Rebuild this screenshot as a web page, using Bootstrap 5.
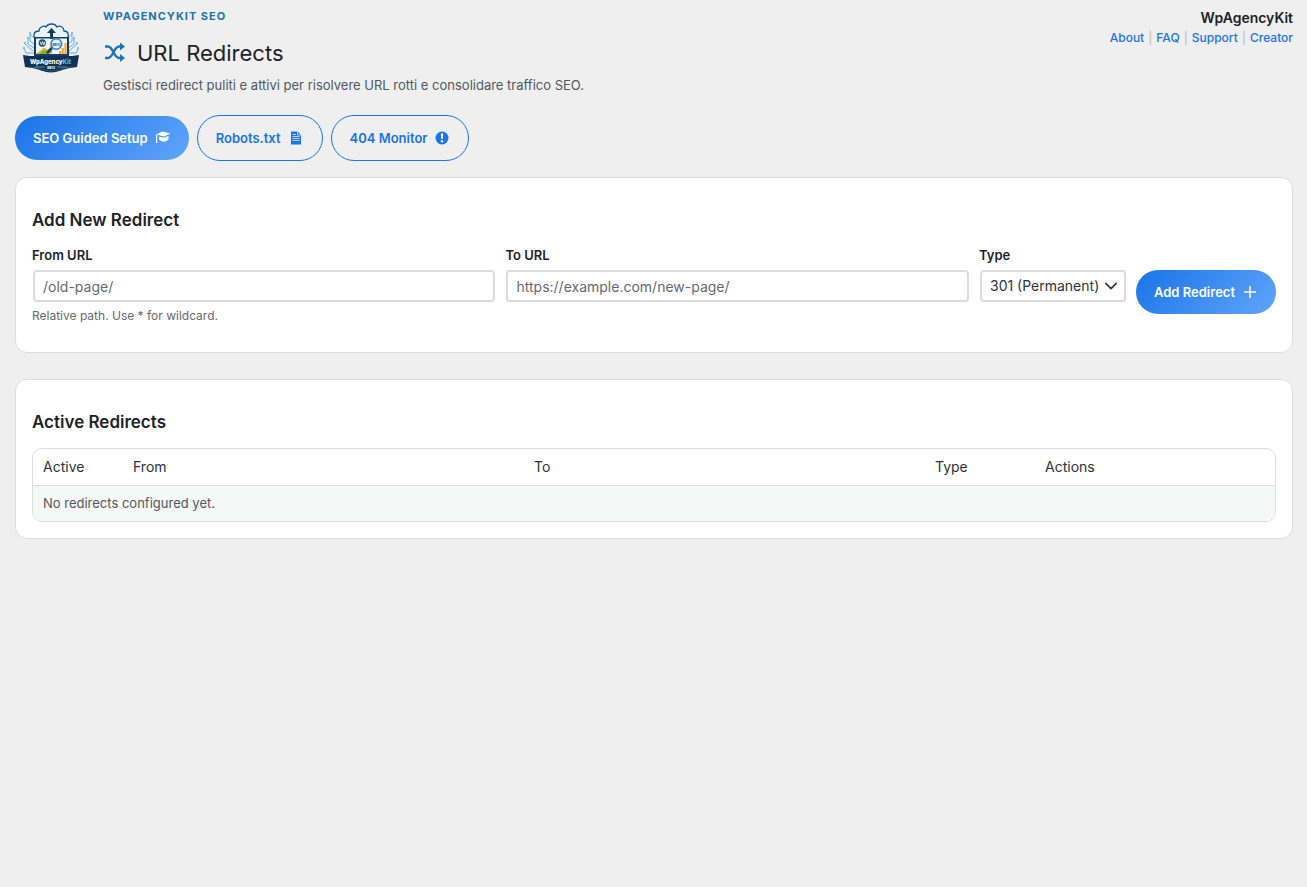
<!DOCTYPE html>
<html lang="it">
<head>
<meta charset="utf-8">
<meta name="viewport" content="width=device-width, initial-scale=1">
<title>URL Redirects – WpAgencyKit SEO</title>
<link rel="stylesheet" href="https://cdn.jsdelivr.net/npm/bootstrap@5.3.0/dist/css/bootstrap.min.css">
<style>
:root { --kit-blue: #1a73e8; --kit-line: #dcdcde; --kit-ink: #1d2327; --kit-muted: #50575e; }
body { background: #efefef; color: var(--kit-ink); font-family: Inter, "Liberation Sans", sans-serif; font-size: 13px; line-height: 20px; }
a { color: var(--kit-blue); text-decoration: none; }
.page { padding: 8px 14px 16px 15px; }
.kit-logo { width: 72px; height: 72px; margin-top: 2px; }
.eyebrow { color: #2271b1; font-size: 11px; line-height: 16px; font-weight: 700; letter-spacing: 1px; }
.title-row { gap: 10px; margin: 15px 0 8px; }
.page-title { font-size: 22px; line-height: 28px; font-weight: 400; margin: 0; }
.intro { color: var(--kit-muted); }
.brand { font-size: 14px; font-weight: 600; }
.brand-links { gap: 4px; font-size: 12px; font-weight: 500; color: #c3c4c7; }
.pill { --bs-btn-font-size: 13px; --bs-btn-line-height: 20px; --bs-btn-font-weight: 600; --bs-btn-padding-x: 18px; --bs-btn-padding-y: 12px; --bs-btn-border-radius: 24px; display: inline-flex; align-items: center; gap: 7px; white-space: nowrap; }
.pill-solid, .pill-solid:hover { color: #fff; border: 0; background: linear-gradient(135deg, #1a73e8, #60a5fa); }
.pill-line { color: var(--kit-blue); border: 1px solid var(--kit-blue); }
.pill svg { width: 16px; height: 16px; }
.panel { background: #fff; border: 1px solid var(--kit-line); border-radius: 12px; padding: 32px 16px 16px; }
.panel + .panel { margin-top: 26px; }
.panel h2 { font-size: 17px; line-height: 20px; font-weight: 600; margin: 0; }
.redirect-form { display: grid; grid-template-columns: minmax(0, 1fr) minmax(0, 1fr) 148px auto; gap: 9px; margin-top: 16px; margin-bottom: 12px; }
.redirect-form label { display: block; font-weight: 600; line-height: 18px; margin-bottom: 6px; }
.field { height: 32px; padding: 0 8px; font-size: 14px; line-height: 28px; border: 2px solid var(--kit-line); border-radius: 4px; color: #2c3338; width: auto; min-width: 0; }
.field::placeholder { color: #646970; }
.field-cell { display: flex; flex-direction: column; padding: 0 1px; }
.field-cell label, .field-cell .hint { margin-left: -1px; }
select.field { background-position: right 6px center; background-size: 14px 14px; padding-right: 20px; }
.hint { color: #646970; font-size: 12px; line-height: 16px; margin-top: 6px; }
.table-frame { border: 1px solid var(--kit-line); border-radius: 10px; overflow: hidden; margin-top: 16px; }
.redirects { --bs-table-bg: transparent; table-layout: fixed; margin: 0; }
.redirects th { font-size: 14px; font-weight: 400; line-height: 20px; padding: 8px 10px; color: #2c3338; border-bottom: 1px solid var(--kit-line); }
.redirects td { background: #f6f7f7; color: var(--kit-muted); line-height: 19px; padding: 8px 10px; border: 0; }
.col-active { width: 90px; } .col-type { width: 110px; } .col-actions { width: 240px; }
</style>
</head>
<body>
<main class="page">
  <header class="d-flex align-items-start justify-content-between">
    <div class="d-flex gap-3">
      <svg class="kit-logo" viewBox="0 0 72 72" role="img" aria-label="WpAgencyKit SEO">
        <g fill="none" stroke="#5eaee4" stroke-width="1">
          <path d="M19 38l-6-4v-5M19 34l-4-3v-7M20 43h-9l-2-4M20 29l-5-5M53 38l6-4v-5M53 34l4-3v-7M52 43h9l2-4M52 29l5-5M18 41l-8-7M54 41l8-7"/>
        </g>
        <g fill="#5eaee4"><circle cx="13" cy="28" r="1"/><circle cx="15" cy="23" r="1"/><circle cx="9" cy="38" r="1"/><circle cx="10" cy="33" r="1"/><circle cx="59" cy="28" r="1"/><circle cx="57" cy="23" r="1"/><circle cx="63" cy="38" r="1"/><circle cx="62" cy="33" r="1"/></g>
        <path d="M23 29c-6-1-5-8 1-8 0-4 5-6 7-4 2-4 9-4 11 0 3-2 7 0 7 4 5 0 6 7 1 8z" fill="#e7f3fb" stroke="#17548a" stroke-width="1.3"/>
        <path d="M19 27h35v20H19z" fill="#133c68"/>
        <path d="M21 28.500h31v15.500H21z" fill="#eef6f8"/>
        <path d="M21 44l8-6 4 2 3-4 1 7-4 1z" fill="#74b43c"/>
        <path d="M23 44l6-5 4 2 4-5" stroke="#edb329" stroke-width="1.500" fill="none"/>
        <path d="M44 41h2v3h-2zM46.700 38h2v6h-2zM49.500 33h2v11h-2z" fill="#f5a22d"/>
        <path d="M36.500 18l-4.500 5h3v6h3v-6h3z" fill="#12395f"/>
        <circle cx="27.300" cy="33" r="3.700" fill="#1d5278"/>
        <path d="M25 31.500l1.500 3.500 1-3.500 1.500 3.500 1-3.500" stroke="#fff" stroke-width=".8" fill="none"/>
        <path d="M37 38l-5 5" stroke="#173e69" stroke-width="2.500"/>
        <circle cx="41.300" cy="34" r="5.300" fill="#e3f4fc" stroke="#3478b5" stroke-width="1.500"/>
        <text x="41.300" y="35.500" text-anchor="middle" font-size="4" font-weight="700" fill="#1d568b">SEO</text>
        <path d="M8 45l7 1h42l7-1-2 12-7 1c-7 1-12 4.500-19 4.500S24 59 17 58l-7-1z" fill="#123153"/>
        <path d="M14 57c10 0 15 4 22 4s12-4 22-4" fill="none" stroke="#2e628d" stroke-width=".8"/>
        <text x="35.500" y="53.500" text-anchor="middle" font-size="6" font-weight="800" fill="#fff">WpAgency<tspan fill="#4bc7ed">Kit</tspan></text>
        <text x="36" y="58.500" text-anchor="middle" font-size="4" font-weight="700" fill="#fff">SEO</text>
        <path d="M20 57h10M42 57h10" stroke="#9fc3dd" stroke-width=".6"/>
      </svg>
      <div>
        <div class="eyebrow">WPAGENCYKIT SEO</div>
        <div class="d-flex align-items-center title-row">
          <svg width="24" height="24" viewBox="0 0 24 24" fill="none" stroke="#2271b1" stroke-width="2.300" aria-hidden="true"><path d="M2 5.500h3c5 0 6 11.500 11 11.500h2M2 17h3c5 0 6-11.500 11-11.500h2"/><path d="M17 1.500l5 4-5 4zM17 13l5 4-5 4z" fill="#2271b1" stroke="none"/></svg>
          <h1 class="page-title">URL Redirects</h1>
        </div>
        <div class="intro">Gestisci redirect puliti e attivi per risolvere URL rotti e consolidare traffico SEO.</div>
      </div>
    </div>
    <div class="text-end">
      <div class="brand">WpAgencyKit</div>
      <nav class="brand-links d-flex"><a href="#about">About</a><span>|</span><a href="#faq">FAQ</a><span>|</span><a href="#support">Support</a><span>|</span><a href="#creator">Creator</a></nav>
    </div>
  </header>

  <div class="d-flex flex-wrap align-items-center gap-2 mt-3 pt-1">
    <button type="button" class="btn pill pill-solid">SEO Guided Setup
      <svg viewBox="0 0 16 16" fill="#fff" aria-hidden="true"><path d="M7.500 1.500L15.500 3.500 9 6.500 1 4.500zM4 6.500l5 1.300 4.500-2V9.500c-1.500 2.500-7 3-9.500 0zM1 5h1.200v4.500L2.500 13H.8L1 9.500z"/></svg>
    </button>
    <button type="button" class="btn pill pill-line">Robots.txt
      <svg viewBox="0 0 16 16" aria-hidden="true"><path d="M3 1.500h6.500L13 5v9.500H3z" fill="#1a73e8"/><path d="M9.500 1.500V5H13M4.500 4.500h3.500M4.500 6.500h7M4.500 8.500h7M4.500 10.500h7" fill="none" stroke="#efefef" stroke-width=".8"/></svg>
    </button>
    <button type="button" class="btn pill pill-line">404 Monitor
      <svg viewBox="0 0 16 16" aria-hidden="true"><circle cx="8" cy="8" r="6.500" fill="#1a73e8"/><path d="M6.800 3.500h2.400L8.800 9H7.200z" fill="#fff"/><circle cx="8" cy="11.200" r="1.200" fill="#fff"/></svg>
    </button>
  </div>

  <section class="panel mt-3">
    <h2>Add New Redirect</h2>
    <form class="redirect-form">
      <div class="field-cell">
        <label for="from-url">From URL</label>
        <input class="form-control field" id="from-url" type="text" placeholder="/old-page/">
        <div class="hint">Relative path. Use * for wildcard.</div>
      </div>
      <div class="field-cell">
        <label for="to-url">To URL</label>
        <input class="form-control field" id="to-url" type="text" placeholder="https://example.com/new-page/">
      </div>
      <div class="field-cell">
        <label for="redirect-type">Type</label>
        <select class="form-select field" id="redirect-type"><option>301 (Permanent)</option><option>302 (Temporary)</option></select>
      </div>
      <div class="pt-4">
        <button type="button" class="btn pill pill-solid">Add Redirect
          <svg viewBox="0 0 16 16" fill="none" stroke="#fff" stroke-width="1.500" aria-hidden="true"><path d="M8 2v12M2 8h12"/></svg>
        </button>
      </div>
    </form>
  </section>

  <section class="panel">
    <h2>Active Redirects</h2>
    <div class="table-frame">
      <table class="table redirects">
        <thead><tr><th class="col-active">Active</th><th>From</th><th>To</th><th class="col-type">Type</th><th class="col-actions">Actions</th></tr></thead>
        <tbody><tr><td colspan="5">No redirects configured yet.</td></tr></tbody>
      </table>
    </div>
  </section>
</main>
<script src="https://cdn.jsdelivr.net/npm/bootstrap@5.3.0/dist/js/bootstrap.bundle.min.js"></script>
</body>
</html>
